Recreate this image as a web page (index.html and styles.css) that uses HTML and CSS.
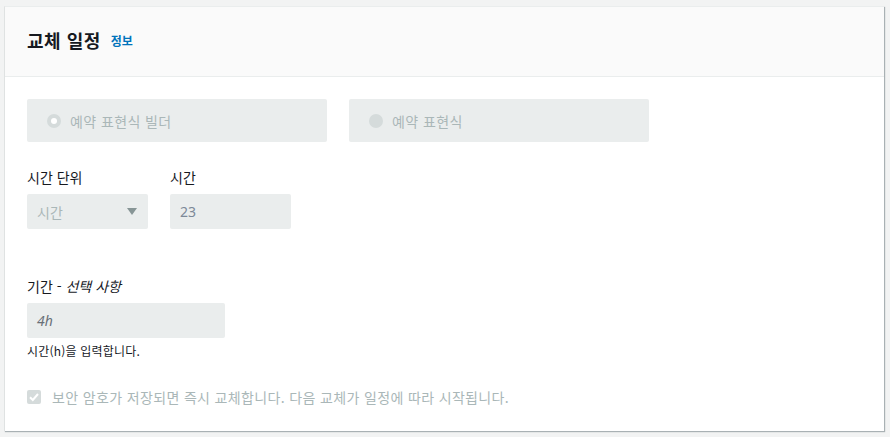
FILE: index.html
```html
<!DOCTYPE html>
<html lang="ko">
<head>
<meta charset="utf-8">
<link rel="stylesheet" href="styles.css">
</head>
<body>
<div class="card">
  <div class="card-header">
    <h2 class="title">교체 일정</h2>
    <a class="info" href="#">정보</a>
  </div>
  <div class="card-body">
    <div class="tiles">
      <div class="tile">
        <span class="radio checked"></span>
        <span class="tile-label">예약 표현식 빌더</span>
      </div>
      <div class="tile">
        <span class="radio"></span>
        <span class="tile-label">예약 표현식</span>
      </div>
    </div>
    <div class="row">
      <div class="field">
        <div class="label">시간 단위</div>
        <div class="control select">
          <span>시간</span>
          <svg class="caret" width="10" height="8" viewBox="0 0 10 8"><path d="M0 0 L10 0 L5 7 Z" fill="#879596"/></svg>
        </div>
      </div>
      <div class="field">
        <div class="label">시간</div>
        <div class="control input-sm"><span>23</span></div>
      </div>
    </div>
    <div class="field duration">
      <div class="label">기간 - <i>선택 사항</i></div>
      <div class="control input-md"><i>4h</i></div>
      <div class="hint">시간(h)을 입력합니다.</div>
    </div>
    <div class="check-row">
      <span class="checkbox">
        <svg width="14" height="14" viewBox="0 0 14 14"><path d="M3 7.2 L5.8 10 L11 4" fill="none" stroke="#fff" stroke-width="2"/></svg>
      </span>
      <span class="check-label">보안 암호가 저장되면 즉시 교체합니다. 다음 교체가 일정에 따라 시작됩니다.</span>
    </div>
  </div>
</div>
</body>
</html>
```

FILE: styles.css
```css
html, body {
  margin: 0;
  padding: 0;
  background: #f2f3f3;
}
body {
  font-family: "Noto Sans", "Noto Sans CJK KR", sans-serif;
  color: #16191f;
  padding: 6px 5px 6px 4px;
}
.card {
  background: #fff;
  border-left: 1px solid #dfe2e2;
  border-top: 1px solid #eaeded;
  box-shadow: 1px 1px 1px 0 rgba(0, 28, 36, 0.3);
  width: 880px;
  height: 425px;
  box-sizing: border-box;
}
.card-header {
  background: #fafafa;
  border-bottom: 1px solid #eaeded;
  height: 70px;
  box-sizing: border-box;
  display: flex;
  align-items: center;
  padding: 0 0 4px 22px;
}
.title {
  margin: 0;
  font-size: 18px;
  letter-spacing: 0.5px;
  font-weight: 700;
  font-family: "Noto Sans CJK KR", sans-serif;
  color: #16191f;
}
.info {
  margin-left: 10px;
  font-size: 12px;
  font-weight: 700;
  font-family: "Noto Sans CJK KR", sans-serif;
  color: #0073bb;
  text-decoration: none;
  margin-top: 2px;
}
.card-body {
  padding: 22px 22px 0 22px;
}
.tiles {
  display: flex;
  gap: 22px;
}
.tile {
  width: 300px;
  height: 43px;
  background: #eaeded;
  border-radius: 2px;
  display: flex;
  align-items: center;
  padding-left: 20px;
  box-sizing: border-box;
}
.radio {
  width: 14px;
  height: 14px;
  border-radius: 50%;
  background: #d5dbdb;
  box-sizing: border-box;
  position: relative;
}
.radio.checked::after {
  content: "";
  position: absolute;
  left: 4px;
  top: 4px;
  width: 6px;
  height: 6px;
  border-radius: 50%;
  background: #fff;
}
.tile-label {
  margin-left: 9px;
  font-size: 14px;
  letter-spacing: 0.4px;
  color: #aab7b8;
  font-family: "Noto Sans CJK KR", sans-serif;
}
.row {
  display: flex;
  gap: 22px;
  margin-top: 24px;
}
.label {
  font-size: 14px;
  color: #16191f;
  font-family: "Noto Sans CJK KR", sans-serif;
  line-height: 22px;
  margin-bottom: 6px;
}
.label i {
  font-style: italic;
}
.control {
  background: #eaeded;
  border-radius: 2px;
  height: 35px;
  display: flex;
  align-items: center;
  box-sizing: border-box;
  padding-left: 10px;
  font-size: 14px;
  color: #7d8998;
}
.select {
  width: 121px;
  justify-content: space-between;
  padding-right: 11px;
  font-family: "Noto Sans CJK KR", sans-serif;
  color: #aab7b8;
}
.caret {
  margin-top: 1px;
}
.input-sm {
  width: 121px;
}
.duration {
  margin-top: 46px;
}
.input-md {
  width: 198px;
}
.input-md i {
  font-style: italic;
  color: #687078;
}
.hint {
  font-size: 12px;
  color: #16191f;
  font-family: "Noto Sans CJK KR", sans-serif;
  letter-spacing: 0.2px;
  margin-top: 4px;
  line-height: 18px;
}
.check-row {
  display: flex;
  align-items: center;
  margin-top: 27px;
}
.checkbox {
  width: 14px;
  height: 14px;
  background: #d5dbdb;
  border-radius: 2px;
  display: flex;
}
.check-label {
  margin-left: 11px;
  font-size: 14px;
  letter-spacing: 0.35px;
  color: #aab7b8;
  font-family: "Noto Sans CJK KR", sans-serif;
}
```
